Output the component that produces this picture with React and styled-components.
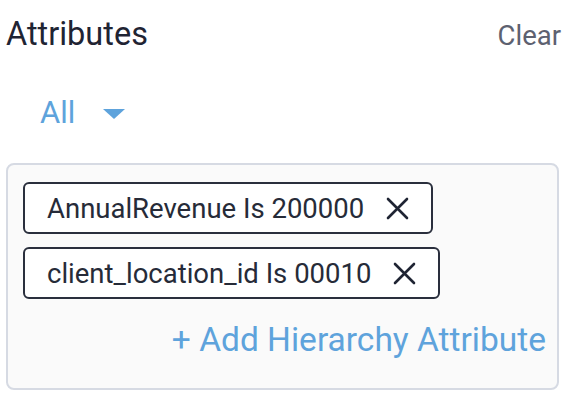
import React from "react";
import styled, { createGlobalStyle } from "styled-components";

const GlobalStyle = createGlobalStyle`
  body {
    margin: 0;
    background: #ffffff;
    font-family: Roboto, "Liberation Sans", Arial, sans-serif;
  }
`;

const Panel = styled.section`
  width: 578px;
  box-sizing: border-box;
  padding: 18px 19px 0 6px;
`;

const Header = styled.div`
  display: flex;
  justify-content: space-between;
  align-items: baseline;
  margin-right: -2px;
`;

const Title = styled.h2`
  margin: 0;
  font-size: 32.5px;
  line-height: 32px;
  font-weight: 400;
  color: #1f2433;
`;

const ClearButton = styled.button`
  background: none;
  border: none;
  padding: 0;
  font-family: inherit;
  font-size: 27.5px;
  line-height: 32px;
  color: #5d6170;
  cursor: pointer;
`;

const ScopeSelect = styled.button`
  display: flex;
  align-items: center;
  gap: 28px;
  margin: 45px 0 0 34px;
  background: none;
  border: none;
  padding: 0;
  font-family: inherit;
  font-size: 31px;
  line-height: 32px;
  color: #5ea3dc;
  cursor: pointer;
`;

const Caret = styled.span`
  width: 0;
  height: 0;
  border-left: 11.5px solid transparent;
  border-right: 11.5px solid transparent;
  border-top: 10px solid #5ea3dc;
  margin-top: 2px;
`;

const FilterBox = styled.div`
  margin-top: 34px;
  border: 2px solid #d6dae3;
  border-radius: 8px;
  background: #fafafa;
  padding: 17px 11px 32px 15px;
  display: flex;
  flex-direction: column;
  align-items: flex-start;
  gap: 13px;
`;

const Chip = styled.div`
  display: flex;
  align-items: center;
  gap: 22px;
  height: 52px;
  box-sizing: border-box;
  padding: 0 22px;
  border: 2px solid #2a2f3d;
  border-radius: 6px;
  background: #ffffff;
  font-size: 27.5px;
  color: #262b38;
  white-space: nowrap;
`;

const RemoveButton = styled.button`
  display: flex;
  background: none;
  border: none;
  padding: 0;
  cursor: pointer;
`;

const AddLink = styled.button`
  align-self: flex-end;
  margin-top: 12px;
  background: none;
  border: none;
  padding: 0;
  font-family: inherit;
  font-size: 33.5px;
  line-height: 32px;
  color: #5ea3dc;
  cursor: pointer;
`;

const CloseIcon = () => (
  <svg width="23" height="23" viewBox="0 0 23 23" fill="none">
    <path
      d="M2 2L21 21M21 2L2 21"
      stroke="#1f2433"
      strokeWidth="2.6"
      strokeLinecap="round"
    />
  </svg>
);

const filters = [
  "AnnualRevenue Is 200000",
  "client_location_id Is 00010",
];

export default function App() {
  return (
    <>
      <GlobalStyle />
      <Panel>
        <Header>
          <Title>Attributes</Title>
          <ClearButton>Clear</ClearButton>
        </Header>
        <ScopeSelect>
          All
          <Caret />
        </ScopeSelect>
        <FilterBox>
          {filters.map((f) => (
            <Chip key={f}>
              {f}
              <RemoveButton aria-label="Remove">
                <CloseIcon />
              </RemoveButton>
            </Chip>
          ))}
          <AddLink>+ Add Hierarchy Attribute</AddLink>
        </FilterBox>
      </Panel>
    </>
  );
}
